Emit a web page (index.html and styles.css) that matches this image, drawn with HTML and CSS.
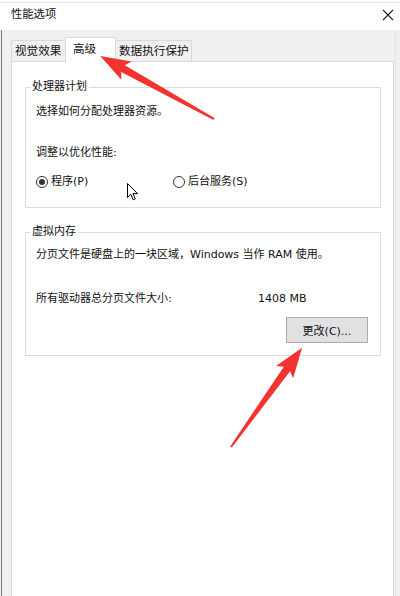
FILE: index.html
```html
<!DOCTYPE html>
<html lang="zh-CN">
<head>
<meta charset="utf-8">
<title>性能选项</title>
<link rel="stylesheet" href="styles.css">
</head>
<body>
<div class="window">
  <div class="titlebar">
    <div class="titlebar-inner">
      <span class="title">性能选项</span>
      <svg class="close" width="12" height="12" viewBox="0 0 12 12"><path d="M1 1 L11 11 M11 1 L1 11" stroke="#202020" stroke-width="1.1" fill="none"/></svg>
    </div>
  </div>
  <div class="client">
    <div class="tabs">
      <div class="tab tab-visual">视觉效果</div>
      <div class="tab tab-adv selected">高级</div>
      <div class="tab tab-dep">数据执行保护</div>
    </div>
    <div class="panel">
      <fieldset class="group group-cpu">
        <legend>处理器计划</legend>
        <p class="line">选择如何分配处理器资源。</p>
        <p class="line line-adjust">调整以优化性能:</p>
        <div class="radios">
          <label class="radio"><span class="circle checked"></span><span>程序(P)</span></label>
          <label class="radio"><span class="circle"></span><span>后台服务(S)</span></label>
        </div>
      </fieldset>
      <fieldset class="group group-vm">
        <legend>虚拟内存</legend>
        <p class="line">分页文件是硬盘上的一块区域，Windows 当作 RAM 使用。</p>
        <div class="size-row">
          <span>所有驱动器总分页文件大小:</span>
          <span>1408 MB</span>
        </div>
        <div class="btn-row"><button class="btn">更改(C)...</button></div>
      </fieldset>
    </div>
  </div>
  <svg class="annot" width="400" height="596" viewBox="0 0 400 596">
    <g transform="translate(214 119) rotate(-151.07)">
      <polygon points="0,-1 104,-3.8 100,-10.5 130,0 100,10.5 104,3.8 0,1" fill="#f2332f"/>
    </g>
    <g transform="translate(231 447) rotate(-54.36)">
      <polygon points="0,-1 96,-3.8 92,-10.5 122,0 92,10.5 96,3.8 0,1" fill="#f2332f"/>
    </g>
  </svg>
  <svg class="cursor" width="12" height="18" viewBox="0 0 12 18">
    <path d="M0.5 0.5 L0.5 14.5 L3.8 11.4 L6.2 16.8 L8.3 15.9 L6 10.6 L10.5 10.6 Z" fill="#fff" stroke="#000" stroke-width="1" stroke-linejoin="round"/>
  </svg>
</div>
</body>
</html>
```
FILE: styles.css
```css
html, body {
  margin: 0;
  padding: 0;
}
body {
  background: #e6e6e6;
  font-family: "DejaVu Sans", "Noto Sans CJK SC", sans-serif;
  font-size: 11px;
  line-height: 16px;
  color: #111;
}
.window {
  position: relative;
  width: 400px;
  height: 596px;
  overflow: hidden;
  display: flex;
  flex-direction: column;
  background: #f0f0f0;
}
.titlebar {
  background: #fff;
  padding-top: 2px;
}
.titlebar-inner {
  height: 27px;
  border-top: 1px solid #e4e4e4;
  display: flex;
  align-items: center;
  justify-content: space-between;
  padding: 0 6px 0 11px;
}
.title {
  font-size: 11.3px;
  margin-top: -3px;
}
.close {
  margin-top: -4px;
}
.client {
  flex: 1;
  display: flex;
  flex-direction: column;
  margin-left: 1px;
  border-left: 1px solid #7a7a7a;
  padding: 0 6px 0 9px;
  background: #f0f0f0;
  box-shadow: inset -4px 0 0 #f0f0f0, inset -5px 0 0 #e4e4e4;
  min-height: 0;
}
.tabs {
  display: flex;
  align-items: flex-end;
  padding-top: 7px;
  margin-bottom: -1px;
  position: relative;
  z-index: 1;
}
.tab {
  box-sizing: border-box;
  height: 21px;
  margin-bottom: 1px;
  border: 1px solid #d9d9d9;
  border-bottom: none;
  background: #f0f0f0;
  font-size: 11.6px;
  line-height: 20px;
  padding-left: 3px;
  white-space: nowrap;
}
.tab-visual { width: 55px; }
.tab-adv { width: 51px; margin-left: -1px; }
.tab-dep { width: 77px; margin-left: -1px; }
.tab.selected {
  height: 25px;
  margin-bottom: 0;
  background: #fff;
  padding-left: 7px;
  line-height: 23px;
  position: relative;
  z-index: 2;
}
.panel {
  flex: 1;
  background: #fff;
  border: 1px solid #d9d9d9;
  border-bottom: none;
  padding: 17px 12px 0 13px;
}
.group {
  margin: 0;
  border: 1px solid #dcdcdc;
  padding: 9px 11px 17px 10px;
  min-width: 0;
}
.group legend {
  padding: 0 2px;
  margin-left: -6px;
  line-height: 16px;
}
.group-vm {
  margin-top: 16px;
  padding: 7px 12px 12px 10px;
}
.line {
  margin: 0;
  white-space: nowrap;
}
.line-adjust {
  margin-top: 25px;
}
.radios {
  margin-top: 13px;
  display: grid;
  grid-template-columns: 137px auto;
}
.radio {
  display: flex;
  align-items: center;
  gap: 3px;
}
.circle {
  box-sizing: border-box;
  width: 12px;
  height: 12px;
  border: 1px solid #333;
  border-radius: 50%;
  display: flex;
  align-items: center;
  justify-content: center;
}
.circle.checked::after {
  content: "";
  width: 6px;
  height: 6px;
  border-radius: 50%;
  background: #333;
}
.size-row {
  margin-top: 28px;
  display: grid;
  grid-template-columns: 222px auto;
}
.btn-row {
  margin-top: 10px;
  display: flex;
  justify-content: flex-end;
}
.btn {
  box-sizing: border-box;
  width: 82px;
  height: 26px;
  background: #e1e1e1;
  border: 1px solid #adadad;
  font-family: "DejaVu Sans", "Noto Sans CJK SC", sans-serif;
  font-size: 11px;
  color: #111;
  padding: 0;
}
.annot {
  position: absolute;
  left: 0;
  top: 0;
  pointer-events: none;
  z-index: 5;
}
.cursor {
  position: absolute;
  left: 127px;
  top: 183px;
  z-index: 6;
}
```
